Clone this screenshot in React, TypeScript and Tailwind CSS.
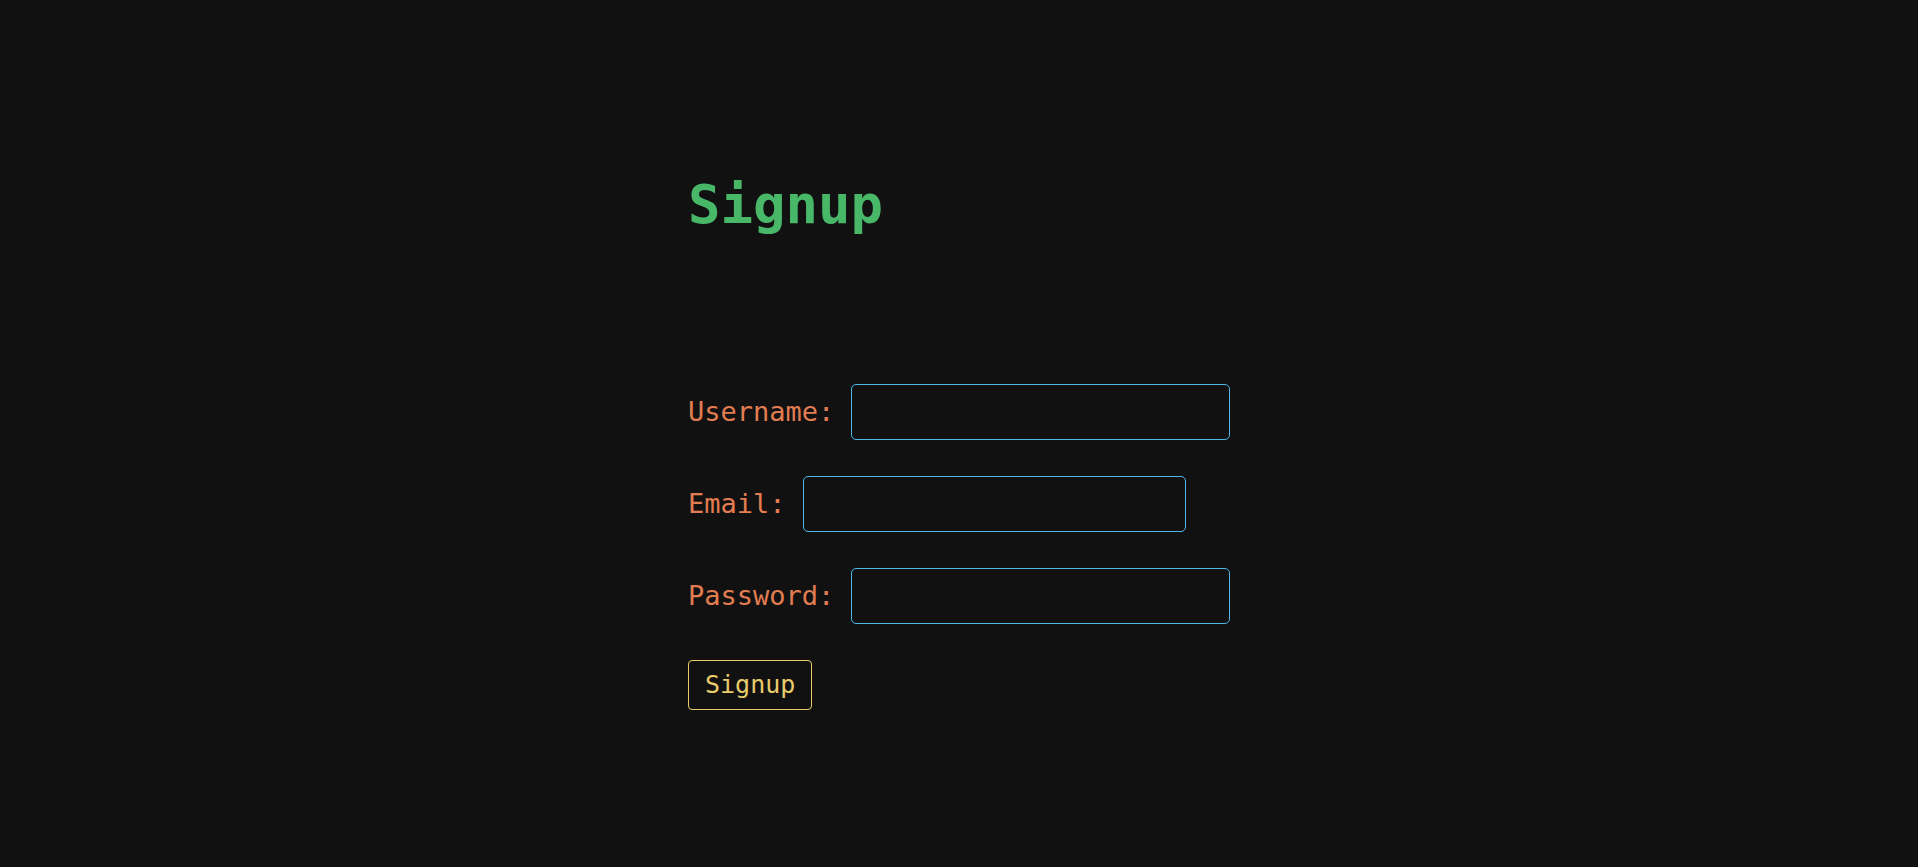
export default function App() {
  const fields = [
    { label: "Username:", type: "text" },
    { label: "Email:", type: "email" },
    { label: "Password:", type: "password" },
  ];

  return (
    <div className="min-h-screen bg-[#111111] font-['DejaVu_Sans_Mono',monospace]">
      <main className="mx-auto w-[542px] pt-[177px]">
        <h1 className="text-[54px] leading-[56px] font-bold text-[#48b868]">Signup</h1>
        <form className="mt-[151px] flex flex-col gap-[36px]" onSubmit={(e) => e.preventDefault()}>
          {fields.map((f) => (
            <div key={f.label} className="flex items-center gap-[17px]">
              <label className="text-[27px] text-[#e27d52]">{f.label}</label>
              <input
                type={f.type}
                className="h-[56px] w-[383px] rounded-[5px] border border-[#4fb6ea] bg-transparent px-2 text-[22px] text-white outline-none"
              />
            </div>
          ))}
          <div>
            <button
              type="submit"
              className="h-[50px] rounded-[4px] border border-[#e8cc6c] px-4 text-[25px] text-[#e8cc6c]"
            >
              Signup
            </button>
          </div>
        </form>
      </main>
    </div>
  );
}
